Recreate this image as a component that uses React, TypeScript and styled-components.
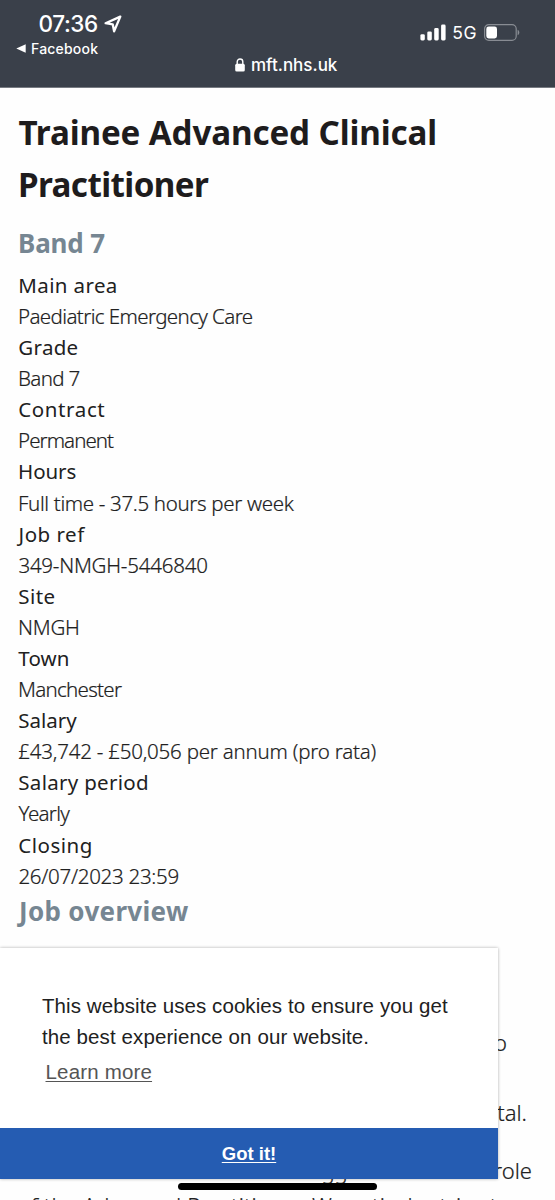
import React from 'react';
import styled, { createGlobalStyle } from 'styled-components';

const GlobalStyle = createGlobalStyle`
  * { box-sizing: border-box; }
  body { margin: 0; background: #fff; }
`;

const Screen = styled.div`
  position: relative;
  width: 555px;
  height: 1200px;
  overflow: hidden;
  background: #fefefe;
  color: #212121;
  font-family: 'Noto Sans', 'Open Sans', sans-serif;
`;

const Header = styled.header`
  height: 88px;
  padding: 9px 35px 0 16px;
  background: #3a404a;
  color: #fff;
  font-family: Inter, 'Noto Sans', sans-serif;
  border-bottom: 1px solid #777b82;
`;
const StatusRow = styled.div`
  display: flex;
  justify-content: space-between;
  height: 45px;
`;
const Clock = styled.div`
  display: flex;
  align-items: center;
  gap: 6px;
  height: 29px;
  padding-left: 22.5px;
`;
const Time = styled.span`
  font-size: 22.5px;
  font-weight: 500;
  letter-spacing: -0.4px;
`;
const BackLink = styled.div`
  display: flex;
  align-items: center;
  gap: 5px;
  height: 20px;
  font-size: 14px;
  font-weight: 500;
  letter-spacing: 0.2px;
`;
const Indicators = styled.div`
  display: flex;
  align-items: center;
  height: 46px;
  font-size: 17px;
`;
const Network = styled.span`
  margin: 1px 7px 0 6px;
  font-size: 17.5px;
  letter-spacing: 0.5px;
`;
const AddressRow = styled.div`
  display: flex;
  align-items: center;
  gap: 6px;
  height: 22px;
  padding-left: 219px;
  font-size: 17px;
  font-weight: 500;
`;

const Content = styled.main`
  padding: 18.6px 18px 0;
`;
const Title = styled.h1`
  margin: 0 0 13px;
  color: #1e1c1d;
  font-size: 33.2px;
  line-height: 52px;
  font-weight: 700;
`;
const Line = styled.span<{ $spacing: number; $indent?: number }>`
  display: block;
  white-space: nowrap;
  letter-spacing: ${(p) => p.$spacing}px;
  margin-left: ${(p) => p.$indent ?? 0}px;
`;
const Subheading = styled.h2<{ $spacing: number; $gap?: number; $indent?: number }>`
  margin: 0 0 ${(p) => p.$gap ?? 0}px ${(p) => p.$indent ?? 0}px;
  color: #768692;
  font-size: 26px;
  line-height: 39px;
  font-weight: 700;
  letter-spacing: ${(p) => p.$spacing}px;
`;
const Details = styled.dl`
  margin: 0;
  font-size: 20.5px;
  line-height: 31.1px;
  white-space: nowrap;
`;
const Term = styled.dt<{ $spacing: number; $indent: number }>`
  margin-left: ${(p) => p.$indent}px;
  font-weight: 400;
  letter-spacing: ${(p) => p.$spacing}px;
`;
const Value = styled.dd<{ $spacing: number; $indent: number }>`
  margin: 0 0 0 ${(p) => p.$indent}px;
  font-weight: 300;
  -webkit-text-stroke: 0.2px currentColor;
  letter-spacing: ${(p) => p.$spacing}px;
`;

const Overview = styled.div`
  margin-top: 94px;
  font-size: 22px;
  line-height: 35px;
  font-weight: 300;
  -webkit-text-stroke: 0.2px currentColor;
  white-space: nowrap;
`;
const OverviewLine = styled.p<{ $width?: number; $gap?: number; $spacing?: number }>`
  display: flex;
  justify-content: ${(p) => (p.$width ? 'flex-end' : 'flex-start')};
  width: ${(p) => (p.$width ? `${p.$width}px` : 'auto')};
  margin: 0 0 ${(p) => p.$gap ?? 0}px;
  letter-spacing: ${(p) => p.$spacing ?? 0}px;
`;

const CookieCard = styled.aside`
  position: absolute;
  left: 0;
  top: 948px;
  width: 498px;
  height: 231px;
  display: flex;
  flex-direction: column;
  background: #fff;
  box-shadow: 0 0 3px rgba(0, 0, 0, 0.32);
  font-family: 'Liberation Sans', Arial, sans-serif;
`;
const CookieMessage = styled.div`
  flex: 1;
  padding: 42px 42px 0;
  font-size: 20.5px;
  line-height: 31.3px;
`;
const LearnMore = styled.a`
  display: inline-block;
  margin: 3px 0 0 3.5px;
  color: #555;
  letter-spacing: 0.17px;
  text-decoration: underline;
  text-decoration-thickness: 1px;
  text-underline-offset: 2px;
`;
const Dismiss = styled.button`
  height: 51px;
  border: 0;
  padding: 0;
  background: #255cb2;
  color: #fff;
  font: 700 18.5px 'Liberation Sans', Arial, sans-serif;
  text-decoration: underline;
  text-decoration-thickness: 1px;
  text-underline-offset: 2px;
`;
const HomeIndicator = styled.div`
  position: absolute;
  left: 178px;
  top: 1183px;
  width: 199px;
  height: 7px;
  border-radius: 4px;
  background: #000;
`;

type Detail = [string, number, number, string, number, number];
const details: Detail[] = [
  ['Main area', 0.38, 0.3, 'Paediatric Emergency Care', -0.6, 0],
  ['Grade', 0.3, 0.3, 'Band 7', -0.65, 0],
  ['Contract', 0.6, 0.3, 'Permanent', -0.93, 0],
  ['Hours', -0.05, 0, 'Full time - 37.5 hours per week', -0.34, 0],
  ['Job ref', 0.5, 0.6, '349-NMGH-5446840', -0.22, 0.4],
  ['Site', 0.4, 0.3, 'NMGH', -0.2, 0],
  ['Town', 0.14, 0.3, 'Manchester', -0.7, 0],
  ['Salary', 0, 0.3, '£43,742 - £50,056 per annum (pro rata)', -0.22, 0.3],
  ['Salary period', 0.3, 0.3, 'Yearly', -0.68, 0.6],
  ['Closing', 0.5, 0.3, '26/07/2023 23:59', -0.28, 0.4],
];

const LocationIcon = () => (
  <svg width="18" height="18" viewBox="0 0 18 18" fill="none" stroke="#fff" strokeWidth="2.3" strokeLinejoin="round">
    <path d="M16.3 1.6 1.6 8.2 8.7 9.3 10.1 16.3Z" />
  </svg>
);
const BackIcon = () => (
  <svg width="10" height="9" viewBox="0 0 10 9" fill="#fff">
    <path d="M0.3 4.5 9.7 0.2V8.8Z" />
  </svg>
);
const SignalIcon = () => (
  <svg width="26" height="17" viewBox="0 0 26 17" fill="#fff">
    <rect x="0.4" y="10.2" width="4.4" height="6.3" rx="1.4" />
    <rect x="7.3" y="7.4" width="4.5" height="9.1" rx="1.4" />
    <rect x="14.2" y="4" width="4.5" height="12.5" rx="1.4" />
    <rect x="21.1" y="0.5" width="4.5" height="16" rx="1.4" />
  </svg>
);
const BatteryIcon = () => (
  <svg width="36" height="17" viewBox="0 0 36 17" fill="none">
    <rect x="0.6" y="0.6" width="31.6" height="15.8" rx="4.2" stroke="#888c93" strokeWidth="1.2" />
    <rect x="2.3" y="2.6" width="10.7" height="11.8" rx="2.4" fill="#fff" />
    <path d="M33.6 5.8C35.9 6.8 35.9 10.2 33.6 11.2Z" fill="#888c93" />
  </svg>
);
const LockIcon = () => (
  <svg width="10" height="14" viewBox="0 0 10 14">
    <rect x="0.2" y="5.8" width="9.6" height="7.8" rx="1.5" fill="#fff" />
    <path d="M2.2 6.4V3.8C2.2 0.1 7.8 0.1 7.8 3.8V6.4" fill="none" stroke="#fff" strokeWidth="1.4" />
  </svg>
);

export default function App() {
  return (
    <Screen>
      <GlobalStyle />
      <Header>
        <StatusRow>
          <div>
            <Clock>
              <Time>07:36</Time>
              <LocationIcon />
            </Clock>
            <BackLink>
              <BackIcon />
              Facebook
            </BackLink>
          </div>
          <Indicators>
            <SignalIcon />
            <Network>5G</Network>
            <BatteryIcon />
          </Indicators>
        </StatusRow>
        <AddressRow>
          <LockIcon />
          mft.nhs.uk
        </AddressRow>
      </Header>
      <Content>
        <Title>
          <Line $spacing={-0.13} $indent={0.5}>Trainee Advanced Clinical</Line>
          <Line $spacing={-0.6} $indent={0}>Practitioner</Line>
        </Title>
        <Subheading $spacing={-0.15} $gap={7.3} $indent={0}>Band 7</Subheading>
        <Details>
          {details.map(([term, ts, ti, value, vs, vi]) => (
            <React.Fragment key={term}>
              <Term $spacing={ts} $indent={ti}>{term}</Term>
              <Value $spacing={vs} $indent={vi}>{value}</Value>
            </React.Fragment>
          ))}
        </Details>
        <Subheading $spacing={0.32} $indent={1}>Job overview</Subheading>
        <Overview>
          <OverviewLine $width={489} $gap={35}>We are looking for enthusiastic nurses to</OverviewLine>
          <OverviewLine $width={509} $gap={23}>at North Manchester General Hospital.</OverviewLine>
          <OverviewLine $width={514}>This is one of the bigger team in the role</OverviewLine>
          <OverviewLine $spacing={0.12}>of the Advanced Practitioner. We actively strive to</OverviewLine>
        </Overview>
      </Content>
      <CookieCard>
        <CookieMessage>
          <Line $spacing={0.08}>This website uses cookies to ensure you get</Line>
          <Line $spacing={0.1}>the best experience on our website.</Line>
          <LearnMore>Learn more</LearnMore>
        </CookieMessage>
        <Dismiss>Got it!</Dismiss>
      </CookieCard>
      <HomeIndicator />
    </Screen>
  );
}
